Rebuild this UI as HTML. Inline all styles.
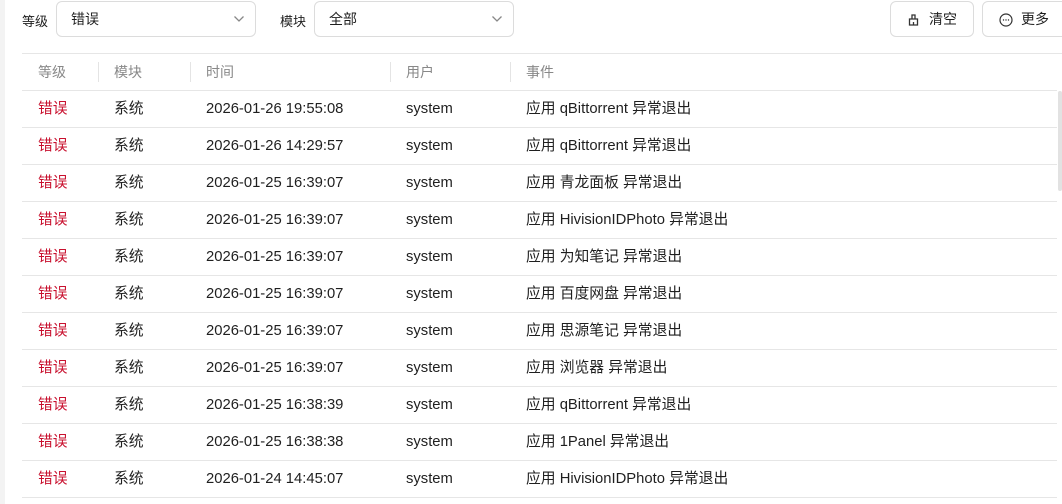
<!DOCTYPE html>
<html><head><meta charset="utf-8"><style>
*{margin:0;padding:0;box-sizing:border-box}
body{width:1062px;height:504px;overflow:hidden;background:#fff;font-family:"Liberation Sans","Noto Sans CJK SC",sans-serif;font-size:14px;color:#1f1f1f;position:relative}
.strip{position:absolute;left:0;top:0;width:5px;height:504px;background:#f3f3f3}
.lbl{position:absolute;top:11px;font-size:13px}
.sel{position:absolute;top:1px;height:36px;border:1px solid #dcdcdc;border-radius:6px;padding:0 14px;line-height:34px;font-size:14px}
.sel svg{position:absolute;right:10px;top:13px}
.btn{position:absolute;top:1px;height:36px;border:1px solid #dcdcdc;border-radius:6px;line-height:34px;font-size:14px}
.hline{position:absolute;left:22px;right:5px;height:1px;background:#e6e6e6}
.cell{position:absolute;line-height:37px;white-space:nowrap;font-size:14.8px;padding-top:1px}
.hd{color:#888;font-size:14px;padding-top:0}
.sep{position:absolute;width:1px;height:20px;top:62px;background:#e4e4e4}
.red{color:#c8102e}
.sb{position:absolute;left:1058px;top:91px;width:4px;height:100px;background:#e2e2e2;border-radius:2px}
</style></head><body>
<div class="strip"></div>
<div class="lbl" style="left:22px">等级</div>
<div class="sel" style="left:56px;width:200px">错误<svg width="12" height="8" viewBox="0 0 12 8"><path d="M1.5 1.5l4.5 4.5 4.5-4.5" fill="none" stroke="#888" stroke-width="1.3"/></svg></div>
<div class="lbl" style="left:280px">模块</div>
<div class="sel" style="left:314px;width:200px">全部<svg width="12" height="8" viewBox="0 0 12 8"><path d="M1.5 1.5l4.5 4.5 4.5-4.5" fill="none" stroke="#888" stroke-width="1.3"/></svg></div>
<div class="btn" style="left:890px;width:84px"><svg style="position:absolute;left:17px;top:12px" width="11" height="12" viewBox="0 0 11 12"><path d="M4 1h3v4H4zM1.5 5h8v6h-8z M5.5 8v3" fill="none" stroke="#333" stroke-width="1.3"/></svg><span style="position:absolute;left:38px">清空</span></div>
<div class="btn" style="left:982px;width:90px"><svg style="position:absolute;left:16px;top:11px" width="14" height="14" viewBox="0 0 14 14"><circle cx="7" cy="7" r="6" fill="none" stroke="#333" stroke-width="1.2"/><circle cx="4.5" cy="7" r=".7" fill="#333"/><circle cx="7" cy="7" r=".7" fill="#333"/><circle cx="9.5" cy="7" r=".7" fill="#333"/></svg><span style="position:absolute;left:38px">更多</span></div>
<div class="hline" style="top:53px;right:0"></div>
<div class="cell hd" style="left:38px;top:54px">等级</div>
<div class="cell hd" style="left:114px;top:54px">模块</div>
<div class="cell hd" style="left:206px;top:54px">时间</div>
<div class="cell hd" style="left:406px;top:54px">用户</div>
<div class="cell hd" style="left:526px;top:54px">事件</div>
<div class="sep" style="left:98px"></div><div class="sep" style="left:190px"></div><div class="sep" style="left:390px"></div><div class="sep" style="left:510px"></div>
<div class="hline" style="top:90px"></div>
<div class="sb"></div>
<div>
<div class="cell red" style="left:38px;top:90px">错误</div><div class="cell" style="left:114px;top:90px">系统</div><div class="cell" style="left:206px;top:90px">2026-01-26 19:55:08</div><div class="cell" style="left:406px;top:90px">system</div><div class="cell" style="left:526px;top:90px">应用 qBittorrent 异常退出</div><div class="hline" style="top:127px"></div>
<div class="cell red" style="left:38px;top:127px">错误</div><div class="cell" style="left:114px;top:127px">系统</div><div class="cell" style="left:206px;top:127px">2026-01-26 14:29:57</div><div class="cell" style="left:406px;top:127px">system</div><div class="cell" style="left:526px;top:127px">应用 qBittorrent 异常退出</div><div class="hline" style="top:164px"></div>
<div class="cell red" style="left:38px;top:164px">错误</div><div class="cell" style="left:114px;top:164px">系统</div><div class="cell" style="left:206px;top:164px">2026-01-25 16:39:07</div><div class="cell" style="left:406px;top:164px">system</div><div class="cell" style="left:526px;top:164px">应用 青龙面板 异常退出</div><div class="hline" style="top:201px"></div>
<div class="cell red" style="left:38px;top:201px">错误</div><div class="cell" style="left:114px;top:201px">系统</div><div class="cell" style="left:206px;top:201px">2026-01-25 16:39:07</div><div class="cell" style="left:406px;top:201px">system</div><div class="cell" style="left:526px;top:201px">应用 HivisionIDPhoto 异常退出</div><div class="hline" style="top:238px"></div>
<div class="cell red" style="left:38px;top:238px">错误</div><div class="cell" style="left:114px;top:238px">系统</div><div class="cell" style="left:206px;top:238px">2026-01-25 16:39:07</div><div class="cell" style="left:406px;top:238px">system</div><div class="cell" style="left:526px;top:238px">应用 为知笔记 异常退出</div><div class="hline" style="top:275px"></div>
<div class="cell red" style="left:38px;top:275px">错误</div><div class="cell" style="left:114px;top:275px">系统</div><div class="cell" style="left:206px;top:275px">2026-01-25 16:39:07</div><div class="cell" style="left:406px;top:275px">system</div><div class="cell" style="left:526px;top:275px">应用 百度网盘 异常退出</div><div class="hline" style="top:312px"></div>
<div class="cell red" style="left:38px;top:312px">错误</div><div class="cell" style="left:114px;top:312px">系统</div><div class="cell" style="left:206px;top:312px">2026-01-25 16:39:07</div><div class="cell" style="left:406px;top:312px">system</div><div class="cell" style="left:526px;top:312px">应用 思源笔记 异常退出</div><div class="hline" style="top:349px"></div>
<div class="cell red" style="left:38px;top:349px">错误</div><div class="cell" style="left:114px;top:349px">系统</div><div class="cell" style="left:206px;top:349px">2026-01-25 16:39:07</div><div class="cell" style="left:406px;top:349px">system</div><div class="cell" style="left:526px;top:349px">应用 浏览器 异常退出</div><div class="hline" style="top:386px"></div>
<div class="cell red" style="left:38px;top:386px">错误</div><div class="cell" style="left:114px;top:386px">系统</div><div class="cell" style="left:206px;top:386px">2026-01-25 16:38:39</div><div class="cell" style="left:406px;top:386px">system</div><div class="cell" style="left:526px;top:386px">应用 qBittorrent 异常退出</div><div class="hline" style="top:423px"></div>
<div class="cell red" style="left:38px;top:423px">错误</div><div class="cell" style="left:114px;top:423px">系统</div><div class="cell" style="left:206px;top:423px">2026-01-25 16:38:38</div><div class="cell" style="left:406px;top:423px">system</div><div class="cell" style="left:526px;top:423px">应用 1Panel 异常退出</div><div class="hline" style="top:460px"></div>
<div class="cell red" style="left:38px;top:460px">错误</div><div class="cell" style="left:114px;top:460px">系统</div><div class="cell" style="left:206px;top:460px">2026-01-24 14:45:07</div><div class="cell" style="left:406px;top:460px">system</div><div class="cell" style="left:526px;top:460px">应用 HivisionIDPhoto 异常退出</div><div class="hline" style="top:497px"></div>
</div>
</body></html>
